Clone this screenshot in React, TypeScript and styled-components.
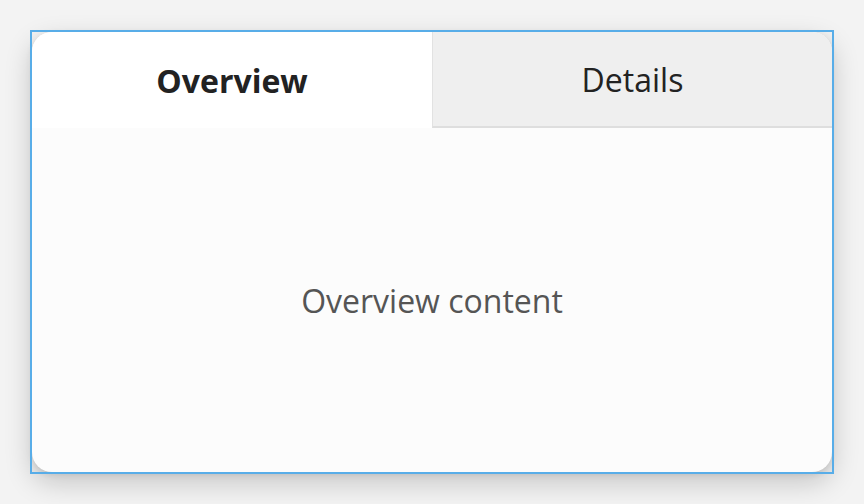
import React, { useState } from "react";
import styled, { createGlobalStyle } from "styled-components";

const Global = createGlobalStyle`
  html, body { margin: 0; padding: 0; background: #f3f3f3; }
  body { font-family: "Open Sans", "Noto Sans", sans-serif; }
`;

const Page = styled.div`
  width: 864px;
  height: 504px;
  padding: 32px;
  box-sizing: border-box;
`;

const FocusFrame = styled.div`
  width: 800px;
  height: 440px;
  outline: 2px solid #58ade8;
`;

const Card = styled.div`
  width: 100%;
  height: 100%;
  border-radius: 20px;
  background: #fcfcfc;
  box-shadow: 0 10px 28px rgba(0, 0, 0, 0.2), 0 2px 6px rgba(0, 0, 0, 0.1);
  overflow: hidden;
  display: flex;
  flex-direction: column;
`;

const TabList = styled.div`
  display: grid;
  grid-template-columns: 1fr 1fr;
  height: 96px;
  flex: none;
`;

const Tab = styled.button<{ $active: boolean }>`
  border: none;
  margin: 0;
  padding: 0;
  font-family: "Open Sans", "Noto Sans", sans-serif;
  font-size: 32px;
  color: #222;
  cursor: pointer;
  font-weight: ${(p) => (p.$active ? 700 : 400)};
  background: ${(p) => (p.$active ? "#ffffff" : "#efefef")};
  border-left: ${(p) => (p.$active ? "none" : "1px solid #e2e2e2")};
  border-bottom: ${(p) => (p.$active ? "none" : "2px solid #dedede")};
  &:focus { outline: none; }
`;

const Panel = styled.div`
  flex: 1;
  display: flex;
  align-items: center;
  justify-content: center;
  font-size: 32px;
  color: #555;
`;

export default function App() {
  const [tab, setTab] = useState<"overview" | "details">("overview");
  return (
    <>
      <Global />
      <Page>
        <FocusFrame>
          <Card>
            <TabList>
              <Tab $active={tab === "overview"} onClick={() => setTab("overview")}>
                Overview
              </Tab>
              <Tab $active={tab === "details"} onClick={() => setTab("details")}>
                Details
              </Tab>
            </TabList>
            <Panel>{tab === "overview" ? "Overview content" : "Details content"}</Panel>
          </Card>
        </FocusFrame>
      </Page>
    </>
  );
}
